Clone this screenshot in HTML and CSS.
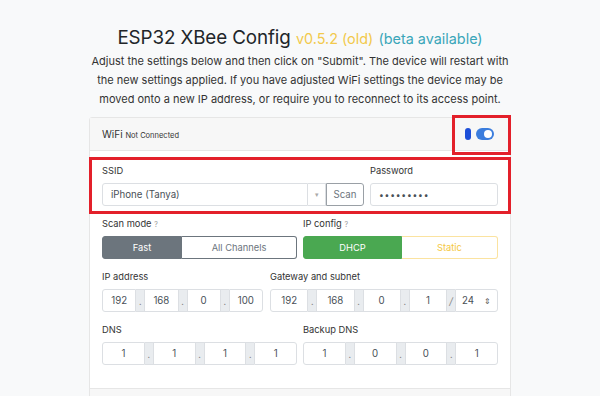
FILE: index.html
```html
<!DOCTYPE html>
<html lang="en">
<head>
    <meta charset="UTF-8">
    <title>ESP32 XBee Config</title>
    <link rel="stylesheet" href="styles.css">
</head>
<body>
    <div class="page">
        <h3 class="title">ESP32 XBee Config <span class="ver">v0.5.2 (old)</span> <span class="beta">(beta available)</span></h3>
        <p class="lead">Adjust the settings below and then click on "Submit". The device will restart with the new settings applied. If you have adjusted WiFi settings the device may be moved onto a new IP address, or require you to reconnect to its access point.</p>

        <div class="card">
            <div class="card-header">
                <span class="card-title">WiFi <small>Not Connected</small></span>
                <span class="toggle"><span class="pill"></span><span class="switch"></span></span>
            </div>
            <div class="card-body">
                <div class="row row-ssid">
                    <div class="group">
                        <label>SSID</label>
                        <div class="input-group">
                            <input class="field" type="text" value="iPhone (Tanya)">
                            <span class="caret">&#9662;</span>
                            <button class="btn-scan">Scan</button>
                        </div>
                    </div>
                    <div class="group">
                        <label>Password</label>
                        <input class="field pass" type="password" value="123456789">
                    </div>
                </div>

                <div class="row row-half">
                    <div class="group">
                        <label>Scan mode <small class="help">?</small></label>
                        <div class="btn-group">
                            <button class="btn btn-secondary active">Fast</button>
                            <button class="btn btn-secondary">All Channels</button>
                        </div>
                    </div>
                    <div class="group">
                        <label>IP config <small class="help">?</small></label>
                        <div class="btn-group">
                            <button class="btn btn-success active">DHCP</button>
                            <button class="btn btn-warning">Static</button>
                        </div>
                    </div>
                </div>

                <div class="row row-ip">
                    <div class="group">
                        <label>IP address</label>
                        <div class="ip">
                            <input class="octet" value="192"><span class="dot">.</span>
                            <input class="octet" value="168"><span class="dot">.</span>
                            <input class="octet" value="0"><span class="dot">.</span>
                            <input class="octet" value="100">
                        </div>
                    </div>
                    <div class="group">
                        <label>Gateway and subnet</label>
                        <div class="ip">
                            <input class="octet" value="192"><span class="dot">.</span>
                            <input class="octet" value="168"><span class="dot">.</span>
                            <input class="octet" value="0"><span class="dot">.</span>
                            <input class="octet" value="1"><span class="dot slash">/</span>
                            <span class="subnet">24 <span class="arrows">&#8661;</span></span>
                        </div>
                    </div>
                </div>

                <div class="row row-half">
                    <div class="group">
                        <label>DNS</label>
                        <div class="ip">
                            <input class="octet" value="1"><span class="dot">.</span>
                            <input class="octet" value="1"><span class="dot">.</span>
                            <input class="octet" value="1"><span class="dot">.</span>
                            <input class="octet" value="1">
                        </div>
                    </div>
                    <div class="group">
                        <label>Backup DNS</label>
                        <div class="ip">
                            <input class="octet" value="1"><span class="dot">.</span>
                            <input class="octet" value="0"><span class="dot">.</span>
                            <input class="octet" value="0"><span class="dot">.</span>
                            <input class="octet" value="1">
                        </div>
                    </div>
                </div>
            </div>
            <div class="card-footer"></div>

            <!-- annotation boxes -->
            <div class="mark mark-toggle"></div>
            <div class="mark mark-ssid"></div>
        </div>
    </div>
</body>
</html>
```

FILE: styles.css
```css
* {
    padding: 0;
    margin: 0;
    box-sizing: border-box;
}

body {
    background: #f8f9fa;
    font-family: Inter, "Liberation Sans", sans-serif;
    color: #212529;
}

.page {
    width: 422px;
    margin: 0 auto;
    padding-top: 24px;
}

.title {
    height: 28px;
    text-align: center;
    font-size: 18.8px;
    font-weight: 400;
    line-height: 28px;
    letter-spacing: -0.1px;
    white-space: nowrap;
}

.title .ver,
.title .beta {
    font-size: 14.4px;
    line-height: 1;
    letter-spacing: 0;
}

.title .ver {
    color: #f2c94c;
}

.title .beta {
    color: #3aa6b9;
}

.lead {
    text-align: center;
    font-size: 11px;
    line-height: 19px;
    color: #333;
}

.card {
    position: relative;
    margin-top: 8px;
    background: #fff;
    border: 1px solid #e6e6e6;
    border-radius: 3px;
}

.card-header {
    height: 33px;
    display: flex;
    align-items: center;
    justify-content: space-between;
    padding: 0 16px 0 12px;
    background: #f7f7f7;
    border-bottom: 1px solid #e6e6e6;
    font-size: 10px;
    color: #333;
}

.card-title small {
    font-size: 7.5px;
}

.toggle {
    display: flex;
    align-items: center;
    gap: 5px;
}

.pill {
    width: 6px;
    height: 12px;
    border-radius: 3px;
    background: #1d4fd8;
}

.switch {
    position: relative;
    width: 18px;
    height: 12px;
    border-radius: 6px;
    background: #3b7ddd;
}

.switch::after {
    content: "";
    position: absolute;
    right: 2px;
    top: 2px;
    width: 8px;
    height: 8px;
    border-radius: 50%;
    background: #fff;
}

.card-body {
    padding: 13px 12px 12px;
}

.card-footer {
    height: 40px;
    background: #f7f7f7;
    border-top: 1px solid #e6e6e6;
}

.row {
    display: grid;
    gap: 6px;
}

.row-ssid {
    grid-template-columns: minmax(0, 1fr) 128px;
}

.row-half {
    grid-template-columns: minmax(0, 1fr) minmax(0, 1fr);
}

.row-ip {
    grid-template-columns: 161px minmax(0, 1fr);
    gap: 7px;
}

.group {
    margin-bottom: 11px;
}

label {
    display: block;
    height: 14px;
    font-size: 9.3px;
    line-height: 14px;
    margin-bottom: 5px;
    color: #333;
}

label .help {
    font-size: 7px;
    line-height: 1;
    color: #999;
}

.field,
.octet {
    display: block;
    height: 23px;
    border: 1px solid #dcdfe3;
    border-radius: 3px;
    background: #fff;
    font-family: inherit;
    font-size: 9.7px;
    color: #495057;
    outline: none;
}

.field {
    width: 100%;
    padding: 0 8px;
}

.pass {
    font-size: 8.5px;
    letter-spacing: 0.8px;
}

.input-group {
    display: flex;
}

.input-group .field {
    flex: 1;
    width: 0;
    border-radius: 3px 0 0 3px;
}

.caret {
    flex: 0 0 18px;
    height: 23px;
    border: 1px solid #dcdfe3;
    border-left: none;
    color: #aaa;
    font-size: 7px;
    display: flex;
    align-items: center;
    justify-content: center;
}

.btn-scan {
    flex: 0 0 38px;
    height: 23px;
    border: 1px solid #9aa0a6;
    border-radius: 0 3px 3px 0;
    background: #fff;
    color: #6c757d;
    font-family: inherit;
    font-size: 9.7px;
}

.btn-group {
    display: flex;
    height: 23px;
}

.btn {
    flex: 1;
    font-family: inherit;
    font-size: 9.3px;
    background: #fff;
    border: 1px solid;
}

.btn:first-child {
    flex: 0 0 80px;
    border-radius: 3px 0 0 3px;
}

.btn:last-child {
    border-radius: 0 3px 3px 0;
    border-left: none;
}

.btn-success:first-child {
    flex-basis: 99px;
}

.btn-secondary {
    border-color: #6c757d;
    color: #6c757d;
}

.btn-secondary.active {
    background: #6c757d;
    color: #fff;
}

.btn-success {
    border-color: #4aa851;
    color: #4aa851;
}

.btn-success.active {
    background: #4aa851;
    color: #fff;
}

.btn-warning {
    border-color: #fbe3a0;
    color: #f5c842;
}

.ip {
    display: flex;
}

.octet {
    flex: 1;
    width: 0;
    text-align: center;
    border-radius: 0;
}

.dot {
    flex: 0 0 8px;
    height: 23px;
    background: #e9ecef;
    border-top: 1px solid #dcdfe3;
    border-bottom: 1px solid #dcdfe3;
    font-size: 9px;
    color: #888;
    display: flex;
    align-items: flex-end;
    justify-content: center;
    padding-bottom: 4px;
}

.dot.slash {
    align-items: center;
    padding-bottom: 0;
    font-size: 10px;
    font-style: italic;
}

.ip .octet:first-child {
    border-radius: 3px 0 0 3px;
}

.ip .octet:last-child {
    border-radius: 0 3px 3px 0;
}

.subnet {
    flex: 0 0 43px;
    height: 23px;
    border: 1px solid #dcdfe3;
    border-radius: 0 3px 3px 0;
    font-size: 9.7px;
    color: #495057;
    display: flex;
    align-items: center;
    justify-content: space-between;
    padding: 0 6px;
}

.arrows {
    font-size: 8px;
    color: #555;
}

.mark {
    position: absolute;
    border: 3px solid #e3202a;
}

.mark-toggle {
    left: 362px;
    top: -3px;
    width: 59px;
    height: 40px;
}

.mark-ssid {
    left: -1px;
    top: 39px;
    width: 422px;
    height: 57px;
}
```
